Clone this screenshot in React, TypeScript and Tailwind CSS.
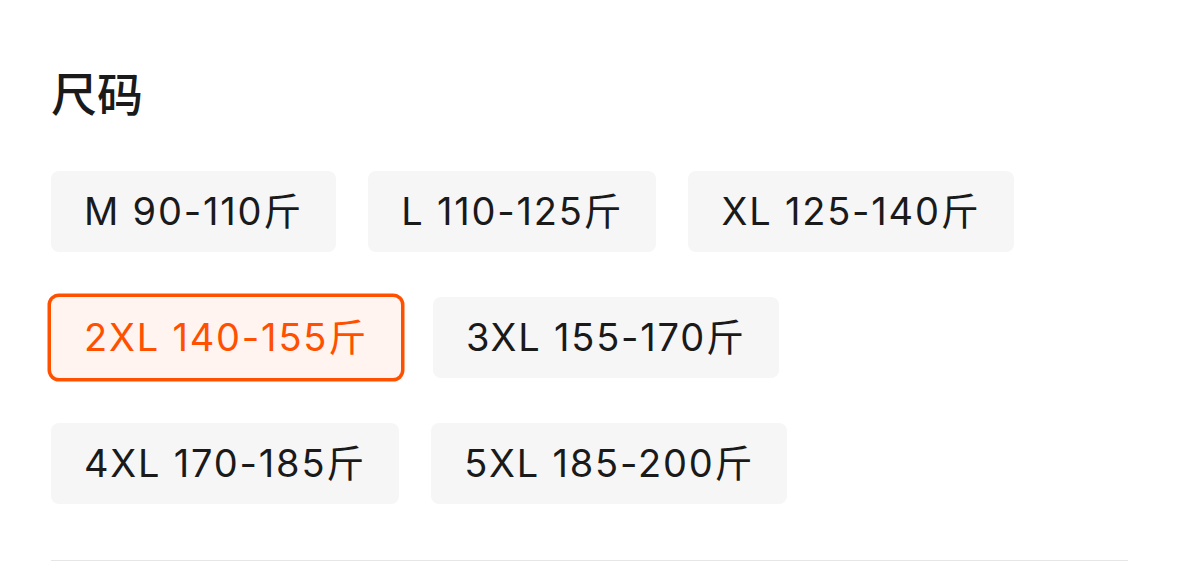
const sizes = [
  ["M 90-110斤", "L 110-125斤", "XL 125-140斤"],
  ["2XL 140-155斤", "3XL 155-170斤"],
  ["4XL 170-185斤", "5XL 185-200斤"],
];

const selected = "2XL 140-155斤";

export default function App() {
  return (
    <div
      className="min-h-[572px] bg-white pl-[51px] pr-[51px] pt-[71px]"
      style={{ fontFamily: '"Inter", "Noto Sans CJK SC", sans-serif' }}
    >
      <h2 className="text-[46px] leading-none font-medium text-[#1a1a1a]">尺码</h2>

      <div className="mt-[54px] flex flex-col gap-[45px]">
        {sizes.map((row, i) => (
          <div key={i} className="flex gap-[32px]">
            {row.map((s) => {
              const active = s === selected;
              return (
                <button
                  key={s}
                  className={
                    active
                      ? "h-[81px] rounded-[8px] bg-[#fff4ef] px-[33px] text-[38px] tracking-[1.8px] text-[#ff5000] ring-[3.5px] ring-[#ff5000]"
                      : "h-[81px] rounded-[8px] bg-[#f6f6f6] px-[33px] text-[38px] tracking-[1.8px] text-[#1a1a1a]"
                  }
                >
                  {s}
                </button>
              );
            })}
          </div>
        ))}
      </div>

      <div className="mt-[56px] h-px bg-[#e6e6e6]" />
    </div>
  );
}
